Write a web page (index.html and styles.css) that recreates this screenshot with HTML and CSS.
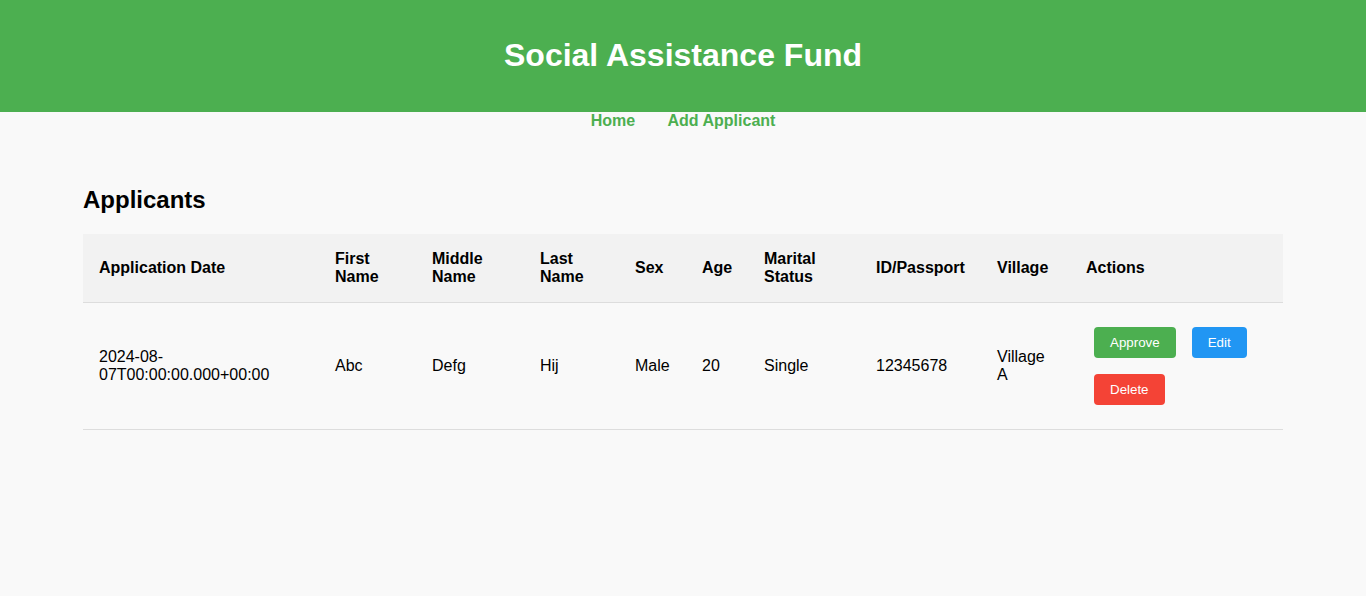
FILE: index.html
```html
<!DOCTYPE html>
<html lang="en">
<head>
<meta charset="utf-8">
<title>Social Assistance Fund</title>
<link rel="stylesheet" href="styles.css">
</head>
<body>
<header class="site-header">
  <h1>Social Assistance Fund</h1>
</header>
<nav class="site-nav">
  <a href="#">Home</a>
  <a href="#">Add Applicant</a>
</nav>
<main class="container">
  <h2>Applicants</h2>
  <table class="applicants">
    <colgroup>
      <col class="c-date"><col class="c-first"><col class="c-middle"><col class="c-last"><col class="c-sex"><col class="c-age"><col class="c-marital"><col class="c-id"><col class="c-village"><col class="c-actions">
    </colgroup>
    <thead>
      <tr>
        <th>Application Date</th>
        <th>First Name</th>
        <th>Middle Name</th>
        <th>Last Name</th>
        <th>Sex</th>
        <th>Age</th>
        <th>Marital Status</th>
        <th>ID/Passport</th>
        <th>Village</th>
        <th>Actions</th>
      </tr>
    </thead>
    <tbody>
      <tr>
        <td>2024-08-07T00:00:00.000+00:00</td>
        <td>Abc</td>
        <td>Defg</td>
        <td>Hij</td>
        <td>Male</td>
        <td>20</td>
        <td>Single</td>
        <td>12345678</td>
        <td>Village A</td>
        <td>
          <div class="actions">
            <button class="btn btn-approve">Approve</button>
            <button class="btn btn-edit">Edit</button>
            <button class="btn btn-delete">Delete</button>
          </div>
        </td>
      </tr>
    </tbody>
  </table>
</main>
</body>
</html>
```
FILE: styles.css
```css
html, body {
  margin: 0;
  padding: 0;
}
body {
  background: #f9f9f9;
  font-family: "Liberation Sans", Arial, sans-serif;
  color: #000;
}
.site-header {
  background: #4caf50;
  color: #fff;
  text-align: center;
  padding: 16px 0;
}
.site-header h1 {
  margin: 21.44px 0;
  font-size: 32px;
  line-height: 37px;
}
.site-nav {
  text-align: center;
  line-height: 18px;
  padding: 0;
}
.site-nav a {
  color: #4caf50;
  font-weight: bold;
  text-decoration: none;
  margin: 0 14px;
  font-size: 16px;
}
.container {
  width: 1200px;
  margin: 0 auto;
  padding-top: 36px;
}
.container h2 {
  font-size: 24px;
  line-height: 28px;
  margin: 20px 0 20px;
}
.applicants {
  width: 1200px;
  border-collapse: collapse;
  table-layout: fixed;
}
.c-date { width: 236px; }
.c-first { width: 97px; }
.c-middle { width: 108px; }
.c-last { width: 95px; }
.c-sex { width: 67px; }
.c-age { width: 62px; }
.c-marital { width: 112px; }
.c-id { width: 121px; }
.c-village { width: 89px; }
.c-actions { width: 213px; }
.applicants th,
.applicants td {
  padding: 16px;
  text-align: left;
  border-bottom: 1px solid #ddd;
  font-size: 16px;
  line-height: 18px;
  vertical-align: middle;
}
.applicants td:first-child {
  word-wrap: break-word;
}
.applicants th {
  background: #f2f2f2;
  font-weight: bold;
  white-space: normal;
}
.actions {
  display: flex;
  flex-wrap: wrap;
}
.btn {
  margin: 8px;
  border: none;
  border-radius: 4px;
  color: #fff;
  font-family: "Liberation Sans", Arial, sans-serif;
  font-size: 13.333px;
  line-height: normal;
  padding: 8px 16px;
  cursor: pointer;
}
.btn-approve { background: #4caf50; }
.btn-edit { background: #2196f3; }
.btn-delete { background: #f44336; }
```
